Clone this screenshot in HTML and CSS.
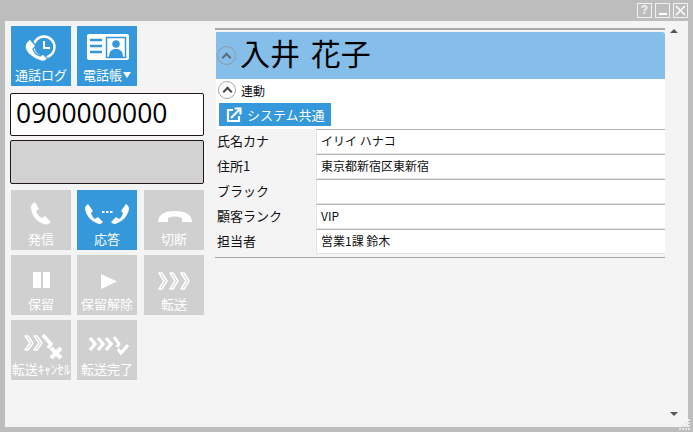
FILE: index.html
```html
<!DOCTYPE html>
<html lang="ja">
<head>
  <meta charset="UTF-8" />
  <title>通話</title>
  <link rel="stylesheet" href="styles.css">
</head>
<body>
  <div class="titlebar">
    <span class="win-btn">?</span>
    <span class="win-btn"><i class="win-min"></i></span>
    <span class="win-btn">
      <svg width="11" height="11" viewBox="0 0 11 11"><path d="M1 1l9 9M10 1l-9 9" stroke="#fff" stroke-width="1.6"/></svg>
    </span>
  </div>

  <div class="window">
    <div class="left">
      <div class="top-btns">
        <div class="btn on">
          <svg class="icon" width="40" height="40" viewBox="0 0 40 40">
            <circle cx="23" cy="21" r="10.5" fill="none" stroke="#fff" stroke-width="2.4"/>
            <path d="M23 15v7h6" fill="none" stroke="#fff" stroke-width="2"/>
            <path d="M9 13l6 7-3 3c1 3 4 6 7 7l3-2 5 5c-2 2-4 3-7 2C12 33 5 27 4 21c0-3 2-6 5-8z" fill="#fff" stroke="#3498db" stroke-width="1.2"/>
          </svg>
          <span class="label">通話ログ</span>
        </div>
        <div class="btn on">
          <svg class="icon" width="44" height="40" viewBox="0 0 44 40">
            <rect x="2" y="8" width="42" height="26" rx="2" fill="#fff"/>
            <path d="M5 14h12M5 20h12M5 26h12" stroke="#3498db" stroke-width="2.4"/>
            <rect x="21.500" y="11.500" width="19" height="20" fill="none" stroke="#3498db" stroke-width="1.500"/>
            <circle cx="31" cy="18" r="3.800" fill="#3498db"/>
            <path d="M24 31c0-6 3-8 7-8s7 2 7 8z" fill="#3498db"/>
          </svg>
          <span class="label">電話帳<i class="caret"></i></span>
        </div>
      </div>

      <div class="phone-input">0900000000</div>
      <div class="status-box"></div>

      <div class="call-btns">
        <div class="btn">
          <svg class="icon" width="40" height="40" viewBox="0 0 40 40">
            <path d="M14 12l4 7-3 2c1 3 3 6 6 7l3-2 6 6c-2 2-4 3-7 2-8-2-13-10-13-17 0-2 2-4 4-5z" fill="#fff"/>
          </svg>
          <span class="label">発信</span>
        </div>
        <div class="btn on">
          <svg class="icon" width="50" height="40" viewBox="0 0 50 40">
            <path d="M6 14c-2 1-3 3-3 5 1 7 7 13 14 15 2 0 3-1 4-2l-5-5-3 2c-2-1-3-3-4-6l2-2z" fill="#fff"/>
            <path d="M44 14c2 1 3 3 3 5-1 7-7 13-14 15-2 0-3-1-4-2l5-5 3 2c2-1 3-3 4-6l-2-2z" fill="#fff"/>
            <path d="M20 22h2.500M24 22h2.500M28 22h2.500" stroke="#fff" stroke-width="2"/>
          </svg>
          <span class="label">応答</span>
        </div>
        <div class="btn">
          <svg class="icon" width="40" height="40" viewBox="0 0 40 40">
            <path d="M4 32c0-8 8-11 17-11s17 3 17 11h-10v-4c-4-2-10-2-14 0v4z" fill="#fff"/>
          </svg>
          <span class="label">切断</span>
        </div>
        <div class="btn">
          <svg class="icon" width="40" height="40" viewBox="0 0 40 40">
            <path d="M12 17h8v16h-8zM22 17h7v16h-7z" fill="#fff"/>
          </svg>
          <span class="label">保留</span>
        </div>
        <div class="btn">
          <svg class="icon" width="40" height="40" viewBox="0 0 40 40">
            <path d="M14 19l16 7.500-16 7.500z" fill="#fff"/>
          </svg>
          <span class="label">保留解除</span>
        </div>
        <div class="btn">
          <svg class="icon" width="40" height="40" viewBox="0 0 40 40">
            <path d="M5 18l5 8-5 8h3l5-8-5-8zM16 18l5 8-5 8h3l5-8-5-8zM27 18l5 8-5 8h3l5-8-5-8z" fill="none" stroke="#fff" stroke-width="1.500" stroke-linejoin="round"/>
          </svg>
          <span class="label">転送</span>
        </div>
        <div class="btn">
          <svg class="icon" width="44" height="40" viewBox="0 0 44 40">
            <path d="M6 16l5 7-5 7h3l5-7-5-7zM15 16l5 7-5 7h3l5-7-5-7z" fill="none" stroke="#fff" stroke-width="1.500" stroke-linejoin="round"/>
            <path d="M24 15l8 9-3 4" fill="none" stroke="#fff" stroke-width="3.500"/>
            <path d="M32 28l10 10M42 28l-10 10" stroke="#fff" stroke-width="4"/>
          </svg>
          <span class="label">転送ｷｬﾝｾﾙ</span>
        </div>
        <div class="btn">
          <svg class="icon" width="44" height="40" viewBox="0 0 44 40">
            <path d="M5 18l5 6-5 6M13 18l5 6-5 6M21 18l5 6-5 6" fill="none" stroke="#fff" stroke-width="3.500"/>
            <path d="M29 17l5 7-2 3M33 29l3 4 7-8" fill="none" stroke="#fff" stroke-width="3"/>
          </svg>
          <span class="label">転送完了</span>
        </div>
      </div>
    </div>

    <div class="right">
      <div class="customer-name">
        <span class="circle-btn dim"><i class="chev"></i></span>
        <span class="name-text">入井 花子</span>
      </div>
      <div class="link-block">
        <div class="link-row">
          <span class="circle-btn"><i class="chev"></i></span>
          <span>連動</span>
        </div>
        <div class="sys-btn">
          <svg width="16" height="16" viewBox="0 0 16 16">
            <path d="M7 3H2v11h11V9" fill="none" stroke="#fff" stroke-width="2.200"/>
            <path d="M5 11l8-8M8.500 1.500h6v6" fill="none" stroke="#fff" stroke-width="2.200"/>
          </svg>
          <span>システム共通</span>
        </div>
      </div>
      <div class="fields">
        <div class="field"><div class="field-name">氏名カナ</div><div class="field-value">イリイ ハナコ</div></div>
        <div class="field"><div class="field-name">住所1</div><div class="field-value">東京都新宿区東新宿</div></div>
        <div class="field"><div class="field-name">ブラック</div><div class="field-value"></div></div>
        <div class="field"><div class="field-name">顧客ランク</div><div class="field-value">VIP</div></div>
        <div class="field"><div class="field-name">担当者</div><div class="field-value">営業1課 鈴木</div></div>
      </div>
    </div>

    <div class="scrollbar">
      <i class="arrow-up"></i>
      <i class="arrow-down"></i>
    </div>
    <svg class="grip" width="12" height="12" viewBox="0 0 12 12">
      <path d="M9 0h2v2H9zM6 3h2v2H6zM9 3h2v2H9zM3 6h2v2H3zM6 6h2v2H6zM9 6h2v2H9zM0 9h2v2H0zM3 9h2v2H3zM6 9h2v2H6zM9 9h2v2H9z" fill="#e6e6e6"/>
    </svg>
  </div>
</body>
</html>
```

FILE: styles.css
```css
html, body {
  height: 100%;
}
body {
  margin: 0;
  padding: 0 5px 5px;
  box-sizing: border-box;
  width: 693px;
  height: 432px;
  overflow: hidden;
  background: #bdbdbd;
  font-family: "Noto Sans CJK JP", "Noto Sans", sans-serif;
  font-size: 13px;
  color: #111;
  display: flex;
  flex-direction: column;
}
i {
  display: block;
}
.titlebar {
  height: 21px;
  flex-shrink: 0;
  display: flex;
  justify-content: flex-end;
  gap: 3px;
  padding-top: 3px;
  box-sizing: border-box;
}
.win-btn {
  width: 15px;
  height: 15px;
  box-sizing: border-box;
  border: 1px solid #f2f2f2;
  color: #f2f2f2;
  font-family: "Liberation Sans", sans-serif;
  font-size: 12px;
  font-weight: bold;
  line-height: 13px;
  text-align: center;
  display: flex;
  align-items: center;
  justify-content: center;
}
.win-min {
  width: 8px;
  height: 2px;
  background: #fff;
  margin-top: 6px;
}
.window {
  flex: 1;
  position: relative;
  display: flex;
  background: #f4f4f4;
  padding: 5px 0 0 5px;
}
.left {
  width: 200px;
  flex-shrink: 0;
}
.top-btns {
  display: flex;
  gap: 6px;
  padding-left: 1px;
}
.btn {
  width: 60px;
  height: 60px;
  background: #d0d0d0;
  color: #fff;
  display: flex;
  flex-direction: column;
  align-items: center;
  overflow: hidden;
}
.btn.on {
  background: #3498db;
}
.icon {
  flex-shrink: 0;
  height: 40px;
}
.label {
  font-size: 13px;
  line-height: 18px;
  white-space: nowrap;
  display: flex;
  align-items: center;
}
.caret {
  width: 0;
  height: 0;
  border-left: 4px solid transparent;
  border-right: 4px solid transparent;
  border-top: 6px solid #fff;
  margin-left: 1px;
}
.phone-input {
  width: 194px;
  height: 43px;
  margin-top: 7px;
  box-sizing: border-box;
  background: #fff;
  border: 1px solid #231815;
  border-radius: 2px;
  padding-left: 5px;
  font-family: "Open Sans", "Noto Sans", sans-serif;
  font-size: 26.5px;
  line-height: 39px;
  color: #000;
}
.status-box {
  width: 194px;
  height: 44px;
  margin-top: 4px;
  box-sizing: border-box;
  background: #d2d2d2;
  border: 1px solid #231815;
  border-radius: 2px;
}
.call-btns {
  display: grid;
  grid-template-columns: 66px 67px 60px;
  row-gap: 5px;
  margin-top: 6px;
  padding-left: 1px;
}
.right {
  width: 450px;
  margin: 2px 0 0 5px;
  flex-shrink: 0;
  border-top: 2px solid #a9a9a9;
  height: 225px;
  border-bottom: 1px solid #a9a9a9;
  padding-top: 2px;
  box-sizing: content-box;
}
.customer-name {
  margin-left: 1px;
  height: 47px;
  background: #85bfe9;
  border-top-right-radius: 3px;
  display: flex;
  align-items: center;
  padding-left: 1px;
  color: #000;
}
.name-text {
  font-size: 30px;
  line-height: 42px;
  margin: 0 0 8px 4px;
  word-spacing: 4px;
}
.circle-btn {
  width: 18px;
  height: 18px;
  box-sizing: border-box;
  border: 1px solid #aaa;
  border-radius: 50%;
  background: #fff;
  display: flex;
  align-items: center;
  justify-content: center;
  flex-shrink: 0;
}
.circle-btn.dim {
  width: 19px;
  height: 19px;
  background: transparent;
  border-color: #8b9aa5;
}
.chev {
  width: 5px;
  height: 5px;
  border-top: 2px solid #444;
  border-left: 2px solid #444;
  transform: rotate(45deg);
  margin-top: 3px;
}
.dim .chev {
  border-color: #5a6d7c;
}
.link-block {
  margin-left: 1px;
  background: #fff;
  height: 50px;
  padding: 2px 0 0 2px;
  box-sizing: border-box;
}
.link-row {
  display: flex;
  align-items: center;
  gap: 5px;
  height: 18px;
  font-size: 12px;
}
.sys-btn {
  width: 112px;
  height: 23px;
  margin: 4px 0 0 1px;
  background: #3498db;
  color: #fff;
  display: flex;
  align-items: center;
  gap: 5px;
  padding-left: 7px;
  box-sizing: border-box;
  font-size: 13px;
}
.fields {
  display: flex;
  flex-direction: column;
}
.field {
  height: 25px;
  display: flex;
}
.field-name {
  width: 101px;
  padding-left: 2px;
  box-sizing: border-box;
  line-height: 23px;
  font-size: 13px;
}
.field-value {
  flex: 1;
  background: #fff;
  border-top: 1px solid #b5b5b5;
  border-left: 1px solid #e4e4e4;
  border-bottom: 1px solid #e4e4e4;
  padding-left: 4px;
  font-size: 12px;
  line-height: 21px;
}
.scrollbar {
  position: absolute;
  right: 10px;
  top: 8px;
  bottom: 11px;
  width: 8px;
  display: flex;
  flex-direction: column;
  justify-content: space-between;
}
.arrow-up {
  width: 0;
  height: 0;
  border-left: 4px solid transparent;
  border-right: 4px solid transparent;
  border-bottom: 4px solid #555;
}
.arrow-down {
  width: 0;
  height: 0;
  border-left: 4px solid transparent;
  border-right: 4px solid transparent;
  border-top: 4px solid #555;
}
.grip {
  position: absolute;
  right: -3px;
  bottom: -4px;
}
```
